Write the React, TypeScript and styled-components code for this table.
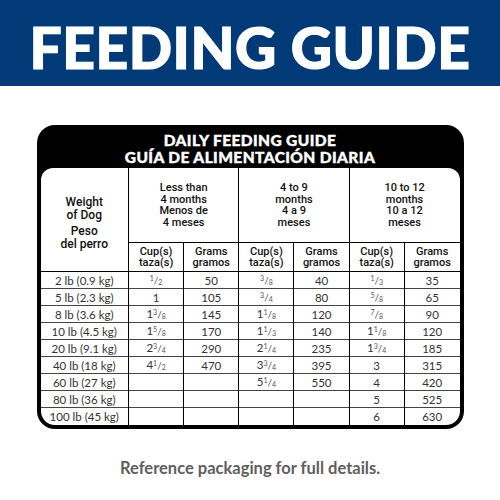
import * as React from 'react';
import styled, {createGlobalStyle} from 'styled-components';

const GlobalStyle = createGlobalStyle`
  html, body {
    margin: 0;
    padding: 0;
    background: #fff;
  }
`;

const SPage = styled('div')`
  width: 500px;
  height: 500px;
  display: flex;
  flex-direction: column;
  align-items: center;
  background: #fff;
  overflow: hidden;
`;

const SBanner = styled('div')`
  width: 100%;
  height: 86px;
  background: #023a78;
  display: flex;
  align-items: center;
  justify-content: center;
`;

const STitle = styled('h1')`
  margin: 0;
  padding-top: 8px;
  font-family: Lato, "Liberation Sans", sans-serif;
  font-weight: 900;
  font-size: 57px;
  line-height: 1;
  color: #fff;
  letter-spacing: 0.5px;
  white-space: nowrap;
  -webkit-text-stroke: 1.2px #fff;
`;

const SCard = styled('div')`
  margin-top: 39px;
  width: 427px;
  background: #000;
  border-radius: 18px;
  padding: 0 4px 4px 4px;
  box-sizing: border-box;
`;

const SCardHeader = styled('div')`
  height: 43px;
  display: flex;
  flex-direction: column;
  align-items: center;
  justify-content: center;
  font-family: Lato, "Liberation Sans", sans-serif;
  font-weight: 900;
  font-size: 15.5px;
  line-height: 17px;
  letter-spacing: 0.4px;
  color: #fff;
  padding-top: 4px;
  box-sizing: border-box;
  -webkit-text-stroke: 0.4px #fff;
`;

const SInner = styled('div')`
  background: #fff;
  border-radius: 12px 12px 14px 14px;
  overflow: hidden;
`;

const STable = styled('table')`
  width: 419px;
  border-collapse: collapse;
  table-layout: fixed;
`;

const SHeadCell = styled('th')<{$tall?: boolean}>`
  border: 1px solid #000;
  border-top: none;
  padding: 0;
  height: ${p => (p.$tall ? '74px' : '28px')};
  vertical-align: middle;
  text-align: center;
  font-family: Roboto, "Liberation Sans", sans-serif;
  font-weight: 500;
  font-size: 11px;
  line-height: 11.5px;
  color: #111;

  &:first-child {
    border-left: none;
  }

  &:last-child {
    border-right: none;
  }
`;

const SWeightHead = styled(SHeadCell)`
  font-size: 12px;
  line-height: 13px;
  padding-top: 8px;
`;

const SGap = styled('span')`
  display: block;
  height: 3px;
`;

const SRow = styled('tr')`
  height: 17px;
`;

const SCell = styled('td')`
  border-left: 1px solid #000;
  border-right: 1px solid #000;
  border-top: 1px solid #444;
  height: 16px;
  padding: 0;
  text-align: center;
  vertical-align: middle;
  font-family: Lato, "Liberation Sans", sans-serif;
  font-size: 11.5px;
  line-height: 13px;
  color: #333;
  overflow: hidden;

  &:first-child {
    border-left: none;
  }

  &:last-child {
    border-right: none;
  }
`;

const SFrac = styled('span')<{$den?: boolean}>`
  font-size: 7px;
  position: relative;
  top: ${p => (p.$den ? '1px' : '-3px')};
  color: #555;
`;

const SSlash = styled('span')`
  font-size: 10px;
  color: #555;
`;

const SFooter = styled('p')`
  margin: 29px 0 0 0;
  font-family: Lato, "Liberation Sans", sans-serif;
  font-weight: 700;
  font-size: 16.5px;
  color: #5e5e5e;
`;

// "1 3/8" -> 1 with small fraction
const Amount = ({value}: {value: string}) => {
  if (!value.includes('/')) {
    return <>{value}</>;
  }
  const parts = value.split(' ');
  const frac = parts[parts.length - 1];
  const whole = parts.length > 1 ? parts[0] : '';
  const [n, d] = frac.split('/');
  return (
    <>
      {whole}
      <SFrac>{n}</SFrac>
      <SSlash>/</SSlash>
      <SFrac $den>{d}</SFrac>
    </>
  );
};

const groups = [
  ['Less than', '4 months', 'Menos de', '4 meses'],
  ['4 to 9', 'months', '4 a 9', 'meses'],
  ['10 to 12', 'months', '10 a 12', 'meses'],
];

const rows: string[][] = [
  ['2 lb (0.9 kg)', '1/2', '50', '3/8', '40', '1/3', '35'],
  ['5 lb (2.3 kg)', '1', '105', '3/4', '80', '5/8', '65'],
  ['8 lb (3.6 kg)', '1 3/8', '145', '1 1/8', '120', '7/8', '90'],
  ['10 lb (4.5 kg)', '1 5/8', '170', '1 1/3', '140', '1 1/8', '120'],
  ['20 lb (9.1 kg)', '2 3/4', '290', '2 1/4', '235', '1 3/4', '185'],
  ['40 lb (18 kg)', '4 1/2', '470', '3 3/4', '395', '3', '315'],
  ['60 lb (27 kg)', '', '', '5 1/4', '550', '4', '420'],
  ['80 lb (36 kg)', '', '', '', '', '5', '525'],
  ['100 lb (45 kg)', '', '', '', '', '6', '630'],
];

export default function App() {
  return (
    <SPage>
      <GlobalStyle/>
      <SBanner>
        <STitle>FEEDING GUIDE</STitle>
      </SBanner>
      <SCard>
        <SCardHeader>
          <div>DAILY FEEDING GUIDE</div>
          <div>GUÍA DE ALIMENTACIÓN DIARIA</div>
        </SCardHeader>
        <SInner>
          <STable>
            <colgroup>
              <col style={{width: 88}}/>
              <col/><col/><col/><col/><col/><col/>
            </colgroup>
            <thead>
              <tr>
                <SWeightHead $tall rowSpan={2}>
                  Weight<br/>of Dog
                  <SGap/>
                  Peso<br/>del perro
                </SWeightHead>
                {groups.map((g, i) => (
                  <SHeadCell $tall colSpan={2} key={i}>
                    {g.map((line, j) => <div key={j}>{line}</div>)}
                  </SHeadCell>
                ))}
              </tr>
              <tr>
                {groups.map((_, i) => (
                  <React.Fragment key={i}>
                    <SHeadCell>Cup(s)<br/>taza(s)</SHeadCell>
                    <SHeadCell>Grams<br/>gramos</SHeadCell>
                  </React.Fragment>
                ))}
              </tr>
            </thead>
            <tbody>
              {rows.map((r, i) => (
                <SRow key={i}>
                  {r.map((v, j) => (
                    <SCell key={j}><Amount value={v}/></SCell>
                  ))}
                </SRow>
              ))}
            </tbody>
          </STable>
        </SInner>
      </SCard>
      <SFooter>Reference packaging for full details.</SFooter>
    </SPage>
  );
}
